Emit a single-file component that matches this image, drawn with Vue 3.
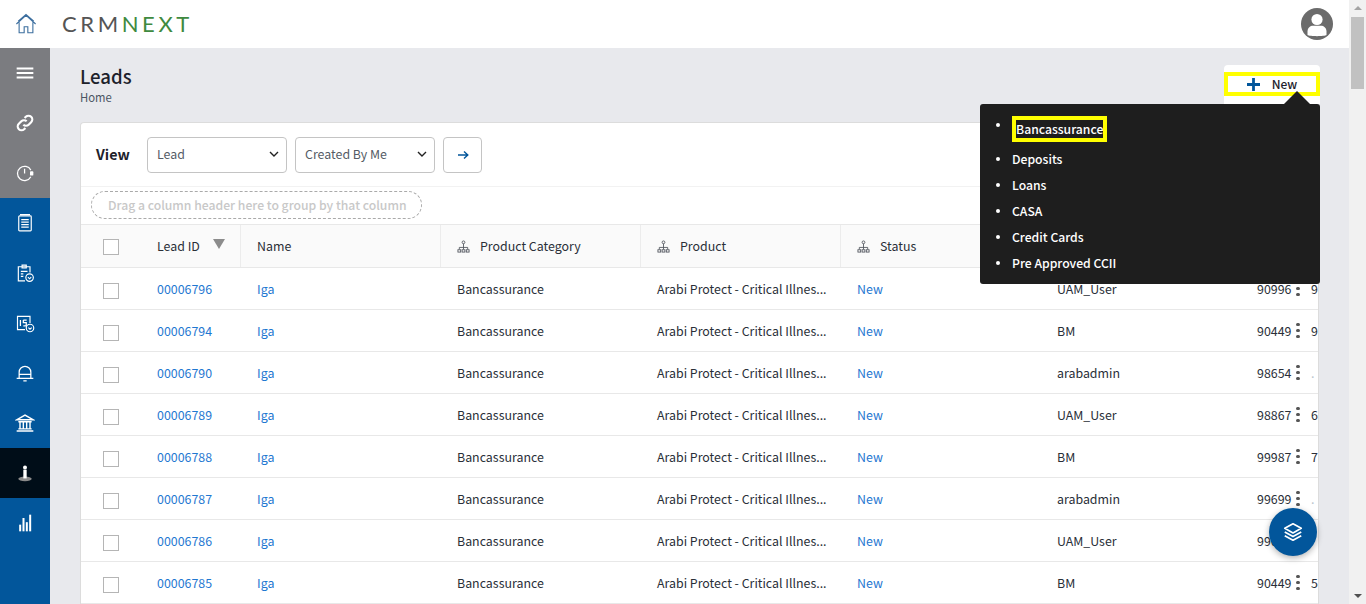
<template>
  <div class="app">
    <div class="page">
      <!-- Topbar -->
      <header class="topbar">
        <svg viewBox="0 0 24 24" class="home-icon">
          <path d="M1.500 12 12 2.500 22.500 12M4.500 10v11.500h5.500v-6.500h4v6.500h5.500V10M3.500 9 12 1.500 20.500 9"/>
        </svg>
        <div class="logo"><span class="logo__crm">CRM</span><span class="logo__next">NEXT</span></div>
        <div class="avatar">
          <svg viewBox="0 0 32 32">
            <circle cx="16" cy="16" r="16" fill="#6b6b6b"/>
            <circle cx="16" cy="11.500" r="5.600" fill="#fff"/>
            <path d="M6.500 27v-3.500c0-4 3-5.800 5.500-5.800h8c2.500 0 5.500 1.800 5.500 5.800V27c-2 1.500-17 1.500-19 0z" fill="#fff"/>
          </svg>
        </div>
      </header>

      <div class="body">
        <!-- Sidebar -->
        <nav class="sidebar">
          <div class="side-item side-item--gray">
            <svg viewBox="0 0 24 24" class="side-icon"><path d="M2 6.500h20M2 12h20M2 17.500h20" stroke-width="2.400"/></svg>
          </div>
          <div class="side-item side-item--gray">
            <svg viewBox="0 0 24 24" class="side-icon"><path d="M10 14a4.500 4.500 0 0 0 6.400 0l3-3a4.500 4.500 0 0 0-6.400-6.400l-1.500 1.500M14 10a4.500 4.500 0 0 0-6.400 0l-3 3a4.500 4.500 0 0 0 6.400 6.400l1.500-1.500" stroke-width="2.600"/></svg>
          </div>
          <div class="side-item side-item--gray">
            <svg viewBox="0 0 24 24" class="side-icon"><path d="M19 8.500a8.500 8.500 0 1 0 0 8M11.500 7v5.500" stroke-width="1.500"/><rect x="18" y="10" width="4" height="5" rx="1" fill="#fff" stroke="none"/></svg>
          </div>
          <div class="side-item">
            <svg viewBox="0 0 24 24" class="side-icon"><rect x="4.500" y="3.500" width="15" height="18" rx="1"/><path d="M7.500 8h9M7.500 11h9M7.500 14h9M7.500 17h9M6 2h12"/></svg>
          </div>
          <div class="side-item">
            <svg viewBox="0 0 24 24" class="side-icon"><path d="M12 21.500H4V4.500h14v7M8.500 2.500h5v3.500h-5zM7 10h8M7 13h3M7 16h3"/><circle cx="17.500" cy="17.500" r="4.500"/><path d="m15.500 17 2 2 2-2" stroke-width="1.300"/></svg>
          </div>
          <div class="side-item">
            <svg viewBox="0 0 24 24" class="side-icon"><path d="M12 20H3V4h15v8"/><path d="M6.500 8.500v7M10 8.500h4M10 8.500v3h3.500v4H10" stroke-width="1.500"/><circle cx="18" cy="18" r="4.500"/><path d="m16 17.500 2 2 2-2" stroke-width="1.300"/></svg>
          </div>
          <div class="side-item">
            <svg viewBox="0 0 24 24" class="side-icon"><path d="M5 18v-7a7 7 0 0 1 14 0v7M2 18.500h20M5 13.500h14M10 21.500h4" stroke-width="1.500"/></svg>
          </div>
          <div class="side-item">
            <svg viewBox="0 0 24 24" class="side-icon"><path d="m2.500 8 9.500-5.500L21.500 8zM4 10.500h16M4 19h16M2 21.500h20M6 11v8M10 11v8M14 11v8M18 11v8" stroke-width="1.700"/></svg>
          </div>
          <div class="side-item side-item--active">
            <svg viewBox="0 0 24 24" class="side-icon">
              <ellipse cx="12" cy="19" rx="8" ry="2.800" fill="#8a8a8a" stroke="none"/>
              <circle cx="12" cy="5.500" r="2.400" fill="#fff" stroke="none"/>
              <rect x="10" y="8" width="4" height="10.500" fill="#fff" stroke="none"/>
            </svg>
          </div>
          <div class="side-item">
            <svg viewBox="0 0 24 24" class="side-icon side-icon--solid"><rect x="5" y="14" width="2.400" height="8"/><rect x="9" y="6" width="2.400" height="16"/><rect x="13" y="11" width="2.400" height="11"/><rect x="17" y="2" width="2.400" height="20"/></svg>
          </div>
        </nav>

        <main class="content">
          <div class="heading">
            <div>
              <h1 class="heading__title">Leads</h1>
              <div class="heading__crumb">Home</div>
            </div>
            <div class="new-wrap">
              <div class="new-btn">
                <svg viewBox="0 0 14 14" class="new-btn__plus"><path d="M7 0v14M0 7h14"/></svg>
                <span class="new-btn__text">New</span>
              </div>
            </div>
          </div>

          <section class="card">
            <div class="toolbar">
              <span class="toolbar__label">View</span>
              <div class="select">
                <span>Lead</span>
                <svg viewBox="0 0 12 12" class="select__chev"><path d="m2 4 4 4 4-4"/></svg>
              </div>
              <div class="select">
                <span>Created By Me</span>
                <svg viewBox="0 0 12 12" class="select__chev"><path d="m2 4 4 4 4-4"/></svg>
              </div>
              <button class="go-btn">
                <svg viewBox="0 0 12 12"><path d="M1 6h10M7 2.500 10.800 6 7 9.500"/></svg>
              </button>
            </div>

            <div class="group-bar">
              <div class="group-pill">Drag a column header here to group by that column</div>
            </div>

            <div class="table">
              <div class="row row--head">
                <div class="cell cell--check"><span class="checkbox"></span></div>
                <div class="cell cell--id">
                  Lead ID
                  <span class="sort-arrow"></span>
                </div>
                <div class="cell">Name</div>
                <div v-for="h in groupedHeads" :key="h" class="cell">
                  <svg viewBox="0 0 14 14" class="tree-icon">
                    <circle cx="7" cy="2.500" r="1.500"/>
                    <path d="M7 4v4M2.500 10V8h9v2M7 8v2"/>
                    <rect x="1" y="10.500" width="3" height="2.500"/>
                    <rect x="5.500" y="10.500" width="3" height="2.500"/>
                    <rect x="10" y="10.500" width="3" height="2.500"/>
                  </svg>
                  {{ h }}
                </div>
                <div class="cell"></div>
                <div class="cell"></div>
                <div class="cell"></div>
              </div>

              <div v-for="lead in leads" :key="lead.id" class="row">
                <div class="cell cell--check"><span class="checkbox"></span></div>
                <div class="cell cell--id"><a class="link">{{ lead.id }}</a></div>
                <div class="cell"><a class="link">Iga</a></div>
                <div class="cell">Bancassurance</div>
                <div class="cell">Arabi Protect - Critical Illnes...</div>
                <div class="cell"><a class="link">New</a></div>
                <div class="cell">{{ lead.owner }}</div>
                <div class="cell">
                  {{ lead.phone }}
                  <span class="kebab"><i></i><i></i><i></i></span>
                </div>
                <div class="cell cell--last" :class="{ 'cell--faint': lead.extra === '.' }">{{ lead.extra }}</div>
              </div>
            </div>
          </section>
        </main>
      </div>
    </div>

    <!-- Scrollbar -->
    <div class="scrollbar">
      <span class="scrollbar__up"></span>
      <span class="scrollbar__thumb"></span>
      <span class="scrollbar__down"></span>
    </div>

    <!-- New menu -->
    <div class="menu">
      <ul class="menu__list">
        <li v-for="(m, i) in menuItems" :key="m" :class="{ 'menu__item--marked': i === 0 }">
          <span>{{ m }}</span>
        </li>
      </ul>
    </div>

    <button class="fab">
      <svg viewBox="0 0 24 24">
        <path d="m12 3 9 5-9 5-9-5zM3 12l9 5 9-5M3 16l9 5 9-5"/>
      </svg>
    </button>
  </div>
</template>

<script setup>
const groupedHeads = ['Product Category', 'Product', 'Status']

const menuItems = ['Bancassurance', 'Deposits', 'Loans', 'CASA', 'Credit Cards', 'Pre Approved CCII']

const leads = [
  { id: '00006796', owner: 'UAM_User', phone: '90996', extra: '9' },
  { id: '00006794', owner: 'BM', phone: '90449', extra: '9' },
  { id: '00006790', owner: 'arabadmin', phone: '98654', extra: '.' },
  { id: '00006789', owner: 'UAM_User', phone: '98867', extra: '6' },
  { id: '00006788', owner: 'BM', phone: '99987', extra: '7' },
  { id: '00006787', owner: 'arabadmin', phone: '99699', extra: '.' },
  { id: '00006786', owner: 'UAM_User', phone: '99699', extra: '' },
  { id: '00006785', owner: 'BM', phone: '90449', extra: '5' }
]
</script>

<style>
html, body { margin: 0; overflow: hidden; }
</style>

<style scoped>
/* ===== Base ===== */
.app { display: flex; height: 604px; width: 1366px; overflow: hidden; position: relative; font-family: "Noto Sans CJK JP", "Noto Sans", sans-serif; font-size: 12.400px; color: #2a2f38; background: #e8e9ed; }
.page { flex: 1; min-width: 0; display: flex; flex-direction: column; }

/* ===== Topbar ===== */
.topbar { height: 48px; flex: none; background: #fff; display: flex; align-items: center; padding-left: 15px; padding-right: 16px; }
.home-icon { width: 22px; height: 22px; fill: none; stroke: #3d6f9f; stroke-width: 1.200; }
.logo { margin-left: 25px; font-family: Lato, sans-serif; font-weight: 400; font-size: 22px; letter-spacing: 3.600px; line-height: 1; }
.logo__crm { color: #555; }
.logo__next { color: #3f8a3f; }
.avatar { margin-left: auto; width: 32px; height: 32px; }
.avatar svg { display: block; width: 32px; height: 32px; }

.body { flex: 1; min-height: 0; display: flex; }

/* ===== Sidebar ===== */
.sidebar { width: 50px; flex: none; background: #02569b; }
.side-item { height: 50px; display: grid; place-items: center; }
.side-item--gray { background: #7b7c80; }
.side-item--active { background: #000d18; }
.side-icon { width: 20px; height: 20px; fill: none; stroke: #fff; stroke-width: 1.400; }
.side-icon--solid { fill: #fff; stroke: none; }

/* ===== Content ===== */
.content { flex: 1; min-width: 0; padding: 17px 30px 0; }
.heading { display: flex; justify-content: space-between; height: 57px; }
.heading__title { margin: 0; font-size: 18.600px; font-weight: 500; line-height: 22px; color: #1d222b; }
.heading__crumb { font-size: 11.300px; line-height: 18px; margin-top: 1px; color: #4b5563; }
.new-wrap { width: 96px; height: 39px; margin-right: -1px; background: #fff; border-radius: 4px 4px 0 0; padding-top: 7px; box-sizing: border-box; }
.new-btn { height: 24px; box-sizing: border-box; border: 4px solid #ffff00; display: flex; align-items: center; justify-content: center; gap: 12px; font-size: 12px; font-weight: 500; color: #1d222b; }
.new-btn__plus { width: 13px; height: 13px; fill: none; stroke: #02569b; stroke-width: 3; }
.new-btn__text { padding-bottom: 2px; }

.card { background: #fff; border: 1px solid #dcdcdc; border-bottom: 0; border-radius: 4px 4px 0 0; overflow: hidden; }

.toolbar { height: 64px; display: flex; align-items: center; box-sizing: border-box; padding-left: 15px; gap: 8px; border-bottom: 1px solid #f2f2f2; }
.toolbar__label { width: 43px; padding-bottom: 2px; font-size: 14.300px; font-weight: 700; color: #1d222b; }
.select { width: 140px; height: 36px; box-sizing: border-box; border: 1px solid #c4c4c4; border-radius: 4px; display: flex; align-items: center; justify-content: space-between; padding: 0 6px 2px 9px; color: #555c66; }
.select__chev { width: 12px; height: 12px; fill: none; stroke: #222; stroke-width: 1.400; }
.go-btn { width: 39px; height: 36px; padding: 0; background: #fff; border: 1px solid #c4c4c4; border-radius: 4px; display: grid; place-items: center; }
.go-btn svg { width: 12px; height: 12px; fill: none; stroke: #02569b; stroke-width: 1.400; }

.group-bar { height: 38px; padding: 4px 10px 0; box-sizing: border-box; border-bottom: 1px solid #e8e8e8; }
.group-pill { width: 331px; height: 28px; box-sizing: border-box; border: 1px dashed #aaa; border-radius: 14px; padding-left: 16px; line-height: 26px; white-space: nowrap; font-size: 12.200px; font-weight: 500; color: #c8c8c8; }

/* ===== Table ===== */
.row { display: grid; grid-template-columns: 60px 100px 200px 200px 200px 200px 200px 70px 200px; height: 42px; box-sizing: border-box; border-bottom: 1px solid #e8e8e8; }
.row--head { height: 43px; background: #fafafa; }
.cell { display: flex; align-items: center; padding-left: 16px; white-space: nowrap; overflow: hidden; color: #2a2f38; }
.row--head .cell { border-right: 1px solid #ececec; }
.row--head .cell:first-child { border-right: 0; }
.cell--check { padding: 4px 0 0 22px; }
.row--head .cell--check { padding-top: 2px; }
.cell--last { padding-left: 0; }
.cell--faint { color: #b9c4cc; }
.checkbox { width: 16px; height: 16px; border: 1.500px solid #b5b5b5; box-sizing: border-box; display: block; background: #fff; }
.link { color: #1f78d1; }
.sort-arrow { width: 0; height: 0; margin: -4px 0 0 13px; border-left: 6px solid transparent; border-right: 6px solid transparent; border-top: 10px solid #8c8c8c; }
.tree-icon { width: 13px; height: 13px; margin-right: 10px; fill: none; stroke: #4b4f58; stroke-width: 0.900; }
.kebab { margin-left: 5px; display: flex; flex-direction: column; gap: 2.500px; }
.kebab i { width: 3.500px; height: 3.500px; border-radius: 50%; background: #555; display: block; }

/* ===== Scrollbar ===== */
.scrollbar { width: 17px; flex: none; background: #f1f1f1; display: flex; flex-direction: column; align-items: center; }
.scrollbar__up { margin-top: 6px; width: 0; height: 0; border-left: 4px solid transparent; border-right: 4px solid transparent; border-bottom: 4px solid #a3a3a3; }
.scrollbar__thumb { margin-top: 7px; width: 13px; height: 72px; background: #c1c1c1; }
.scrollbar__down { margin-top: auto; margin-bottom: 6px; width: 0; height: 0; border-left: 4px solid transparent; border-right: 4px solid transparent; border-top: 4px solid #505050; }

/* ===== Menu ===== */
.menu { position: absolute; left: 980px; top: 104px; width: 340px; height: 180px; background: #1e1e1e; border-radius: 3px; color: #fff; }
.menu::before { content: ""; position: absolute; right: 10px; top: -13px; width: 0; height: 0; border-left: 13px solid transparent; border-right: 13px solid transparent; border-bottom: 13px solid #1e1e1e; }
.menu__list { margin: 0; padding: 12px 0 0 32px; list-style: none; font-size: 12.200px; font-weight: 500; }
.menu__list li { height: 26px; line-height: 26px; position: relative; }
.menu__list li::before { content: ""; position: absolute; left: -16px; top: 11px; width: 4px; height: 4px; border-radius: 50%; background: #fff; }
.menu__list .menu__item--marked { height: 30px; }
.menu__list .menu__item--marked::before { top: 7px; }
.menu__item--marked span { display: inline-block; height: 26px; box-sizing: border-box; border: 4px solid #ffff00; line-height: 18px; }

.fab { position: absolute; left: 1269px; top: 508px; width: 48px; height: 48px; padding: 0; border: 0; border-radius: 50%; background: #02569b; box-shadow: 0 2px 6px rgba(0, 0, 0, 0.3); display: grid; place-items: center; }
.fab svg { width: 22px; height: 22px; fill: none; stroke: #fff; stroke-width: 1.800; stroke-linejoin: round; }
</style>
